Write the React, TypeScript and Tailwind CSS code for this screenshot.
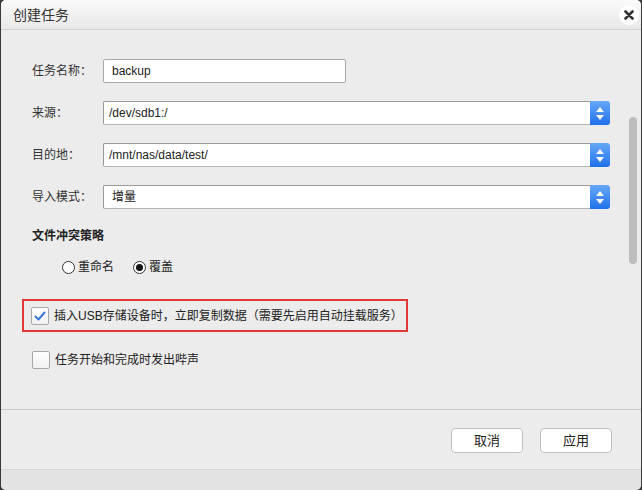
import React from "react";

const font = "font-['Liberation_Sans','Noto_Sans_CJK_SC',sans-serif]";

function Select({ value, pad = "pl-[5px]" }: { value: string; pad?: string }) {
  return (
    <div className="flex h-[24px] flex-1 items-stretch">
      <div className={`flex flex-1 items-center rounded-l-[2px] border border-r-0 border-[#9a9a9a] border-b-[#b5b5b5] bg-white ${pad} text-[12px] text-[#222]`}>
        {value}
      </div>
      <div className="flex w-[20px] flex-col items-center justify-center gap-[3px] rounded-r-[3px] bg-gradient-to-b from-[#66a8f7] to-[#1d6fe9]">
        <svg width="8" height="5" viewBox="0 0 8 5"><path d="M4 0L8 5H0z" fill="#fff" /></svg>
        <svg width="8" height="5" viewBox="0 0 8 5"><path d="M0 0H8L4 5z" fill="#fff" /></svg>
      </div>
    </div>
  );
}

function Row({ label, children, mt }: { label: string; children: React.ReactNode; mt: string }) {
  return (
    <div className={`flex items-center ${mt}`}>
      <div className="w-[71px] text-[12px] leading-[16px] text-[#333]">{label}</div>
      {children}
    </div>
  );
}

function Radio({ checked, label }: { checked?: boolean; label: string }) {
  return (
    <div className="flex items-center gap-[3px]">
      <div className="flex h-[13px] w-[13px] items-center justify-center rounded-full border border-[#333] bg-white">
        {checked && <div className="h-[7px] w-[7px] rounded-full bg-[#111]" />}
      </div>
      <span className="text-[12px] leading-[16px] text-[#222]">{label}</span>
    </div>
  );
}

function Check({ checked, label }: { checked?: boolean; label: string }) {
  return (
    <div className="flex items-center gap-[5px]">
      <div className="flex h-[18px] w-[18px] items-center justify-center rounded-[2px] border border-[#a8a8a8] bg-gradient-to-b from-white to-[#f0f0f0]">
        {checked && (
          <svg width="12" height="10" viewBox="0 0 12 10">
            <path d="M1.5 5.5L4.5 8.5L10.5 1.5" fill="none" stroke="#3b78d8" strokeWidth="2" strokeLinecap="round" strokeLinejoin="round" />
          </svg>
        )}
      </div>
      <span className="text-[12px] leading-[16px] text-[#222]">{label}</span>
    </div>
  );
}

export default function App() {
  return (
    <div className={`h-[490px] w-[642px] bg-[#3a3a3a] px-[1px] ${font}`}>
      <div className="flex h-full w-full flex-col overflow-hidden rounded-[5px] bg-[#ececec]">
        {/* title bar */}
        <div className="flex h-[30px] shrink-0 items-center justify-between border-b border-[#d2d2d2] bg-gradient-to-b from-[#fafafa] to-[#e8e8e8] pl-[12px] pr-[2px]">
          <span className="text-[14px] leading-[18px] text-[#333]">创建任务</span>
          <div className="flex h-[20px] w-[20px] items-center justify-center rounded-full bg-white">
            <svg width="10" height="10" viewBox="0 0 10 10">
              <path d="M1.5 1.5L8.5 8.5M8.5 1.5L1.5 8.5" stroke="#333" strokeWidth="2.6" strokeLinecap="round" />
            </svg>
          </div>
        </div>

        {/* body */}
        <div className="flex h-[380px] shrink-0 border-b border-[#c9c9c9]">
          <div className="flex w-[609px] flex-col pl-[31px] pt-[29px]">
            <Row label="任务名称：" mt="mt-0">
              <div className="flex h-[24px] w-[243px] items-center rounded-[2px] border border-[#a9a9a9] bg-white pl-[8px] text-[12px] text-[#222]">
                backup
              </div>
            </Row>
            <Row label="来源：" mt="mt-[18px]">
              <Select value="/dev/sdb1:/" />
            </Row>
            <Row label="目的地：" mt="mt-[18px]">
              <Select value="/mnt/nas/data/test/" />
            </Row>
            <Row label="导入模式：" mt="mt-[18px]">
              <Select value="增量" pad="pl-[8px]" />
            </Row>

            <div className="mt-[19px] text-[12px] font-bold leading-[16px] text-[#222]">文件冲突策略</div>

            <div className="ml-[30px] mt-[15px] flex items-center gap-[19px]">
              <Radio label="重命名" />
              <Radio checked label="覆盖" />
            </div>

            <div className="-ml-[10px] mt-[24px] flex h-[33px] w-[386px] items-center border-2 border-[#e2383a] pl-[7px]">
              <Check checked label="插入USB存储设备时，立即复制数据（需要先启用自动挂载服务）" />
            </div>

            <div className="mt-[19px]">
              <Check label="任务开始和完成时发出哔声" />
            </div>
          </div>
          <div className="flex flex-1 pl-[19px] pt-[87px]">
            <div className="h-[147px] w-[8px] rounded-full bg-[#bdbdbd]" />
          </div>
        </div>

        {/* footer */}
        <div className="flex h-[60px] shrink-0 items-center justify-end gap-[17px] border-b border-[#d6d6d6] pr-[29px] pt-[2px]">
          <button className="h-[25px] w-[72px] rounded-[4px] border border-[#c0c0c0] bg-white text-[13px] text-[#222]">取消</button>
          <button className="h-[25px] w-[72px] rounded-[4px] border border-[#c0c0c0] bg-white text-[13px] text-[#222]">应用</button>
        </div>
        <div className="flex-1 bg-[#e3e3e3]" />
      </div>
    </div>
  );
}
